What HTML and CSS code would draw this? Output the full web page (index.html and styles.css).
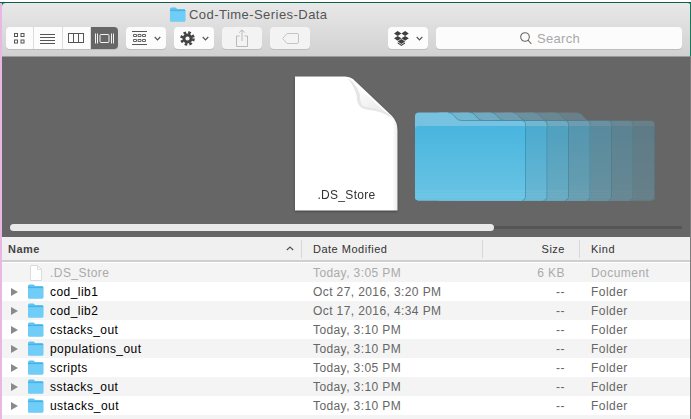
FILE: index.html
```html
<!DOCTYPE html>
<html lang="en">
<head>
    <meta charset="UTF-8">
    <title>Cod-Time-Series-Data</title>
    <link rel="stylesheet" href="styles.css">
</head>
<body>
    <svg class="defs" width="0" height="0">
        <defs>
            <linearGradient id="folderFront" x1="0" y1="0" x2="0" y2="1">
                <stop offset="0" stop-color="#49b5df"/>
                <stop offset="1" stop-color="#6ac4e4"/>
            </linearGradient>
            <linearGradient id="foldShade" x1="0" y1="0" x2="1" y2="1">
                <stop offset="0.2" stop-color="#ffffff"/>
                <stop offset="1" stop-color="#e2e2e2"/>
            </linearGradient>
            <linearGradient id="docEdge" x1="0" y1="0" x2="1" y2="0">
                <stop offset="0.95" stop-color="#ffffff"/>
                <stop offset="1" stop-color="#ececec"/>
            </linearGradient>
            <symbol id="small-folder" viewBox="0 0 16 15">
                <path d="M0.5 2.2 Q0.5 0.5 2 0.5 H5.5 Q6.5 0.5 7 1.3 L7.6 2 H14.5 Q15.8 2 15.8 3.3 V13.6 Q15.8 14.6 14.6 14.6 H1.6 Q0.5 14.6 0.5 13.6 Z" fill="#5dc3f2"/>
                <path d="M0.5 4 H15.8 V13.6 Q15.8 14.6 14.6 14.6 H1.6 Q0.5 14.6 0.5 13.6 Z" fill="#6fcdf7"/>
                <path d="M0.5 3.6 H15.8" stroke="#3fa9dc" stroke-width="0.7"/>
            </symbol>
            <symbol id="folder-base" viewBox="0 0 112 89" overflow="visible">
                <path d="M0 4 Q0 0.5 4 0.5 H33 Q36 0.5 38 2.5 L41 6 Q43 8.5 47 8.5 H107 Q111 8.5 111 12 V85 Q111 88.5 107 88.5 H4 Q0 88.5 0 85 Z" fill="#666"/>
            </symbol>
            <symbol id="big-folder" viewBox="0 0 112 89" overflow="visible">
                <path d="M0 4 Q0 0.5 4 0.5 H33 Q36 0.5 38 2.5 L41 6 Q43 8.5 47 8.5 H107 Q111 8.5 111 12 V85 Q111 88.5 107 88.5 H4 Q0 88.5 0 85 Z" fill="#76c2e0"/>
                <path d="M0 17 Q0 14 4 14 H107 Q111 14 111 17 V85 Q111 88.5 107 88.5 H4 Q0 88.5 0 85 Z" fill="url(#folderFront)"/>
                <path d="M0 79 H111 M0 82 H111 M0 85 H111" stroke="#8ed0ea" stroke-width="0.6" opacity="0.6"/>
                <path d="M33 0.5 Q36 0.5 38 2.500 L41 6 Q43 8.500 47 8.500 H107 Q110.500 8.500 110.500 12 V85 Q110.500 88.500 107 88.500" fill="none" stroke="#2f7f9f" stroke-width="0.8" opacity="0.75"/>
            </symbol>
        </defs>
    </svg>

    <div class="window">
        <header class="toolbar">
            <div class="title">
                <svg class="title-icon" width="17" height="15"><use href="#small-folder"/></svg>
                <span>Cod-Time-Series-Data</span>
            </div>
            <div class="tools">
                <div class="btn-group">
                    <button class="seg" type="button">
                        <svg width="11" height="11" viewBox="0 0 11 11" fill="none" stroke="#555"><rect x="0.5" y="0.5" width="3" height="3"/><rect x="7" y="0.5" width="3" height="3"/><rect x="0.5" y="7" width="3" height="3"/><rect x="7" y="7" width="3" height="3"/></svg>
                    </button>
                    <button class="seg" type="button">
                        <svg width="15" height="11" viewBox="0 0 15 11" fill="none" stroke="#555"><path d="M0 1.5H15M0 4.5H15M0 7.5H15M0 10.5H15"/></svg>
                    </button>
                    <button class="seg" type="button">
                        <svg width="16" height="10" viewBox="0 0 16 10" fill="none" stroke="#555"><rect x="0.5" y="0.5" width="15" height="9"/><path d="M5.5 0V10M10.5 0V10"/></svg>
                    </button>
                    <button class="seg seg-on" type="button">
                        <svg width="19" height="11" viewBox="0 0 19 11" fill="none" stroke="#f2f2f2"><path d="M0.5 0.5V10.5M2.5 0.5V10.5M16.5 0.5V10.5M18.5 0.5V10.5"/><rect x="5" y="1.5" width="9" height="8" rx="1"/></svg>
                    </button>
                </div>
                <button class="btn btn-arrange" type="button">
                    <svg width="15" height="14" viewBox="0 0 15 14" fill="none" stroke="#555"><path d="M0 0.5H15M0 13.5H15"/><path d="M1.5 3.5h3v2h-3zM6 3.5h3v2h-3zM10.5 3.5h3v2h-3zM1.5 8.5h3v2h-3zM6 8.5h3v2h-3zM10.5 8.5h3v2h-3z" stroke-width="0.9"/></svg>
                    <svg class="chevron" width="7" height="5" viewBox="0 0 7 5"><path d="M0.7 1 L3.5 3.8 L6.3 1" fill="none" stroke="#555" stroke-width="1.2"/></svg>
                </button>
                <button class="btn btn-action" type="button">
                    <svg width="15" height="15" viewBox="0 0 15 15" fill="none" stroke="#444"><circle cx="7.5" cy="7.5" r="3.6" stroke-width="3"/><circle cx="7.5" cy="7.5" r="6" stroke-width="2.6" stroke-dasharray="2.6 2.11"/></svg>
                    <svg class="chevron" width="7" height="5" viewBox="0 0 7 5"><path d="M0.7 1 L3.5 3.8 L6.3 1" fill="none" stroke="#555" stroke-width="1.2"/></svg>
                </button>
                <button class="btn btn-faded" type="button">
                    <svg width="12" height="18" viewBox="0 0 12 18" fill="none" stroke="#b9b9b9"><path d="M3.5 7H0.5V17.5H11.5V7H8.5"/><path d="M6 12V1M3.2 3.6L6 0.8L8.8 3.6"/></svg>
                </button>
                <button class="btn btn-faded" type="button">
                    <svg width="17" height="11" viewBox="0 0 17 11" fill="none" stroke="#c4c4c4"><path d="M5 0.5H15Q16.5 0.5 16.5 2V9Q16.5 10.5 15 10.5H5L0.7 5.5Z"/></svg>
                </button>
                <button class="btn btn-dropbox" type="button">
                    <svg width="15" height="15" viewBox="0 0 15 15" fill="#3f3f3f"><path d="M3.7 0L7.4 2.4L3.7 4.9L0 2.4ZM11.1 0L14.8 2.4L11.1 4.9L7.4 2.4ZM3.7 4.9L7.4 7.3L3.7 9.8L0 7.3ZM11.1 4.9L14.8 7.3L11.1 9.8L7.4 7.3ZM7.4 8.1L11.1 10.5L7.4 13L3.7 10.5Z"/><path d="M3.7 11.3L7.4 13.7L11.1 11.3V12.4L7.4 14.9L3.7 12.4Z"/></svg>
                    <svg class="chevron" width="7" height="5" viewBox="0 0 7 5"><path d="M0.7 1 L3.5 3.8 L6.3 1" fill="none" stroke="#555" stroke-width="1.2"/></svg>
                </button>
                <div class="search">
                    <svg width="12" height="13" viewBox="0 0 12 13" fill="none" stroke="#666" stroke-width="1.1"><circle cx="5" cy="5" r="4.3"/><path d="M8 8.2L11.4 12"/></svg>
                    <span>Search</span>
                </div>
            </div>
        </header>

        <section class="coverflow">
            <div class="covers">
                <div class="doc">
                    <svg class="doc-art" width="103" height="135" viewBox="0 0 103 135">
                        <path d="M0 0.5H50Q55 0.5 58 3L97 40Q102.500 46 102.500 54V134.500H0Z" fill="url(#docEdge)"/>
                        <path d="M52 1Q66 12 65.500 23Q65.500 30 73 31Q90 32 98 43Q88 35 74 34Q63 33 62 24Q62 14 52 1Z" fill="#dcdcdc" opacity="0.7"/>
                        <path d="M52 1Q66 12 65.500 23Q65.500 30 73 31Q90 32 98 43Z" fill="url(#foldShade)"/>
                    </svg>
                    <span class="doc-name">.DS_Store</span>
                </div>
                <svg class="stack" width="241" height="90" viewBox="0 0 241 90">
                    <use href="#folder-base" x="129" width="112" height="89"/>
                    <use href="#big-folder" x="129" width="112" height="89" opacity="0.28"/>
                    <use href="#folder-base" x="107.500" width="112" height="89"/>
                    <use href="#big-folder" x="107.500" width="112" height="89" opacity="0.36"/>
                    <use href="#folder-base" x="86" width="112" height="89"/>
                    <use href="#big-folder" x="86" width="112" height="89" opacity="0.46"/>
                    <use href="#folder-base" x="64.500" width="112" height="89"/>
                    <use href="#big-folder" x="64.500" width="112" height="89" opacity="0.6"/>
                    <use href="#folder-base" x="43" width="112" height="89"/>
                    <use href="#big-folder" x="43" width="112" height="89" opacity="0.74"/>
                    <use href="#folder-base" x="21.500" width="112" height="89"/>
                    <use href="#big-folder" x="21.500" width="112" height="89" opacity="0.88"/>
                    <use href="#big-folder" x="0" width="112" height="89"/>
                </svg>
            </div>
            <div class="scroller"><div class="scroller-thumb"></div></div>
        </section>

        <div class="list-head">
            <div class="head-cell head-name">Name
                <svg width="8" height="5" viewBox="0 0 8 5"><path d="M0.8 4 L4 1 L7.200 4" fill="none" stroke="#555" stroke-width="1.2"/></svg>
            </div>
            <div class="head-cell head-date">Date Modified</div>
            <div class="head-cell head-size">Size</div>
            <div class="head-cell head-kind">Kind</div>
        </div>

        <div class="list">
            <div class="row row-dim">
                <span class="arrow-none"></span>
                <svg class="file-icon" width="12" height="16" viewBox="0 0 12 16" fill="#fff" stroke="#dcdcdc"><path d="M0.5 0.5H7.500L11.500 4.500V15.500H0.500Z"/><path d="M7.500 0.500V4.500H11.500" fill="none"/></svg>
                <span class="cell-name">.DS_Store</span>
                <span class="cell-date">Today, 3:05 PM</span>
                <span class="cell-size">6 KB</span>
                <span class="cell-kind">Document</span>
            </div>
            <div class="row">
                <span class="arrow"></span>
                <svg class="folder-icon" width="17" height="15"><use href="#small-folder"/></svg>
                <span class="cell-name">cod_lib1</span>
                <span class="cell-date">Oct 27, 2016, 3:20 PM</span>
                <span class="cell-size">--</span>
                <span class="cell-kind">Folder</span>
            </div>
            <div class="row">
                <span class="arrow"></span>
                <svg class="folder-icon" width="17" height="15"><use href="#small-folder"/></svg>
                <span class="cell-name">cod_lib2</span>
                <span class="cell-date">Oct 17, 2016, 4:34 PM</span>
                <span class="cell-size">--</span>
                <span class="cell-kind">Folder</span>
            </div>
            <div class="row">
                <span class="arrow"></span>
                <svg class="folder-icon" width="17" height="15"><use href="#small-folder"/></svg>
                <span class="cell-name">cstacks_out</span>
                <span class="cell-date">Today, 3:10 PM</span>
                <span class="cell-size">--</span>
                <span class="cell-kind">Folder</span>
            </div>
            <div class="row">
                <span class="arrow"></span>
                <svg class="folder-icon" width="17" height="15"><use href="#small-folder"/></svg>
                <span class="cell-name">populations_out</span>
                <span class="cell-date">Today, 3:10 PM</span>
                <span class="cell-size">--</span>
                <span class="cell-kind">Folder</span>
            </div>
            <div class="row">
                <span class="arrow"></span>
                <svg class="folder-icon" width="17" height="15"><use href="#small-folder"/></svg>
                <span class="cell-name">scripts</span>
                <span class="cell-date">Today, 3:05 PM</span>
                <span class="cell-size">--</span>
                <span class="cell-kind">Folder</span>
            </div>
            <div class="row">
                <span class="arrow"></span>
                <svg class="folder-icon" width="17" height="15"><use href="#small-folder"/></svg>
                <span class="cell-name">sstacks_out</span>
                <span class="cell-date">Today, 3:10 PM</span>
                <span class="cell-size">--</span>
                <span class="cell-kind">Folder</span>
            </div>
            <div class="row">
                <span class="arrow"></span>
                <svg class="folder-icon" width="17" height="15"><use href="#small-folder"/></svg>
                <span class="cell-name">ustacks_out</span>
                <span class="cell-date">Today, 3:10 PM</span>
                <span class="cell-size">--</span>
                <span class="cell-kind">Folder</span>
            </div>
            <div class="row row-end"></div>
        </div>
    </div>
</body>
</html>
```

FILE: styles.css
```css
/* Page and window frame */
html, body {
    height: 100%;
}
body {
    margin: 0;
    overflow: hidden;
    font-family: "Liberation Sans", Arial, sans-serif;
    background:
        linear-gradient(to bottom, #fff 0 2px, #0e5f48 2px 3px, transparent 3px),
        linear-gradient(to right, #e9b7e4 0 2px, #0f7a5c 2px);
}
.defs {
    display: block;
    height: 0;
}
.window {
    margin: 3px 0 0 2px;
    padding-right: 1px;
    height: 416px;
    overflow: hidden;
    border-radius: 4px 4px 0 0;
    background: #7c7c7c;
}

/* Toolbar */
.toolbar {
    height: 54px;
    box-sizing: border-box;
    background: linear-gradient(#e9e8e9, #d2d1d2);
    border-bottom: 1px solid #9a9a9a;
    border-right: 1px solid #0f7a5c;
    margin-right: -1px;
}
.title {
    display: flex;
    align-items: center;
    box-sizing: border-box;
    height: 24px;
    padding: 0 0 2px 167px;
    gap: 3px;
    color: #555;
    font-size: 13px;
    letter-spacing: 0.45px;
}
.tools {
    display: flex;
    padding-left: 4px;
    gap: 8px;
}
.btn-group {
    display: flex;
    width: 112px;
    height: 22px;
    border-radius: 4px;
    overflow: hidden;
    box-shadow: 0 1px 0 #bdbdbd;
}
.seg {
    flex: 1;
    display: flex;
    align-items: center;
    justify-content: center;
    padding: 0;
    border: none;
    border-right: 1px solid #dcdcdc;
    background: #fcfcfc;
}
.seg-on {
    background: #666;
    border-right: none;
}
.btn {
    display: flex;
    align-items: center;
    justify-content: center;
    width: 40px;
    height: 22px;
    padding: 0;
    gap: 7px;
    border: none;
    border-radius: 4px;
    background: #fcfcfc;
    box-shadow: 0 1px 0 #bdbdbd;
}
.btn-faded {
    background: #f3f3f3;
}
.btn-dropbox {
    margin-left: 70px;
}
.search {
    display: flex;
    align-items: center;
    justify-content: center;
    gap: 5px;
    box-sizing: border-box;
    width: 246px;
    height: 22px;
    padding-right: 18px;
    border-radius: 4px;
    background: #fcfcfc;
    box-shadow: 0 1px 0 #bdbdbd;
    color: #a8a8a8;
    font-size: 13px;
    letter-spacing: 0.3px;
}

/* Cover flow */
.coverflow {
    height: 180px;
    box-sizing: border-box;
    padding-top: 19px;
    background: #666;
}
.covers {
    display: flex;
    align-items: flex-start;
    height: 135px;
    padding-left: 293px;
}
.doc {
    position: relative;
    display: flex;
    justify-content: center;
    align-items: flex-end;
    box-sizing: border-box;
    width: 103px;
    height: 135px;
    padding-bottom: 9px;
    filter: drop-shadow(0 1px 1px rgba(0, 0, 0, 0.35));
}
.doc-art {
    position: absolute;
    left: 0;
    top: 0;
}
.doc-name {
    position: relative;
    color: #333;
    font-size: 12px;
    letter-spacing: 0.3px;
}
.stack {
    flex: none;
    margin: 36px 0 0 17px;
}
.scroller {
    position: relative;
    height: 3px;
    margin: 15px 8px 0;
    background: #555;
    border-radius: 2px;
}
.scroller-thumb {
    position: absolute;
    left: 0;
    top: -2px;
    width: 484px;
    height: 7px;
    border-radius: 4px;
    background: #e9e9e9;
}

/* List header */
.list-head {
    display: grid;
    grid-template-columns: 300px 181px 97px 1fr;
    height: 25px;
    box-sizing: border-box;
    align-items: center;
    background: #f0f0f0;
    border-bottom: 2px solid #cfcfcf;
    color: #333;
    font-size: 11px;
}
.head-cell {
    display: flex;
    align-items: center;
    height: 18px;
    box-sizing: border-box;
    border-right: 1px solid #d8d8d8;
    letter-spacing: 0.5px;
}
.head-name {
    justify-content: space-between;
    padding: 0 7px 0 6px;
    font-weight: bold;
    color: #444;
}
.head-date {
    padding-left: 11px;
}
.head-size {
    justify-content: flex-end;
    padding-right: 14px;
}
.head-kind {
    padding-left: 11px;
    border-right: none;
}

/* File rows */
.list {
    padding-top: 1px;
    background: #fff;
}
.row {
    display: grid;
    grid-template-columns: 25px 23px 251px 181px 83px 1fr;
    align-items: center;
    height: 19px;
    font-size: 12px;
    letter-spacing: 0.45px;
    color: #666;
}
.row:nth-child(odd) {
    background: #f4f4f4;
}
.row-end {
    height: 6px;
}
.row-dim, .row-dim .cell-name {
    color: #aaa;
}
.arrow {
    justify-self: start;
    width: 0;
    height: 0;
    margin-left: 9px;
    border-left: 7px solid #8a8a8a;
    border-top: 4px solid transparent;
    border-bottom: 4px solid transparent;
}
.folder-icon, .file-icon {
    display: block;
}
.file-icon {
    margin-left: 3px;
}
.cell-name {
    color: #000;
}
.cell-date {
    padding-left: 12px;
    letter-spacing: 0.4px;
}
.cell-size {
    text-align: right;
}
.cell-kind {
    padding-left: 26px;
}
```
